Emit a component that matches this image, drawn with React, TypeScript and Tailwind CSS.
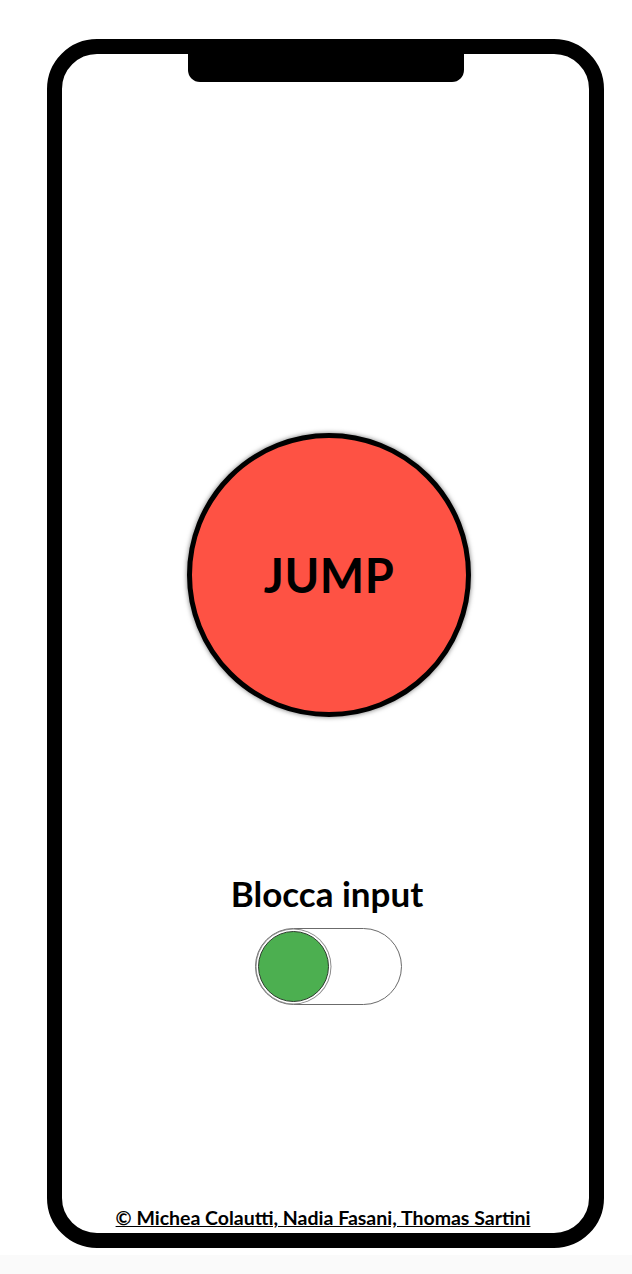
// Schermata del controller: cornice del telefono, pulsante JUMP e interruttore
import { useState } from "react";

const font = { fontFamily: "Lato, 'Open Sans', sans-serif" };

const App = () => {
    // stato dell'interruttore "Blocca input"
    const [locked, setLocked] = useState(false);

    return (
        <div className="min-h-screen bg-[#fafafa]" style={font}>
            <div className="bg-white h-[1255px] pt-[39px] pl-[47px]">
                {/* Cornice del telefono */}
                <div className="relative w-[557px] h-[1209px] border-[15px] border-black rounded-[50px] flex flex-col items-center">
                    {/* Notch */}
                    <div className="absolute top-0 left-[126px] w-[276px] h-[28px] bg-black rounded-b-[12px]" />

                    {/* Pulsante JUMP */}
                    <button
                        type="button"
                        className="mt-[379px] w-[284px] h-[284px] rounded-full bg-[#fe5244] border-[5px] border-black shadow-[0_0_5px_rgba(0,0,0,0.55)] flex items-center justify-center ml-[7px]"
                    >
                        <span className="text-[47px] font-bold text-black tracking-[0.5px] leading-none">JUMP</span>
                    </button>

                    {/* Blocca input */}
                    <p className="mt-[155px] text-[35px] font-bold leading-[42px] text-black ml-[3px]">Blocca input</p>
                    <button
                        type="button"
                        onClick={() => setLocked(!locked)}
                        className="mt-[14px] ml-[5px] w-[147px] h-[77px] rounded-full border border-[#6b6b6b] bg-white flex items-center px-[2px]"
                    >
                        <span
                            className={
                                "w-[71px] h-[71px] rounded-full bg-[#4caf50] border border-[#2f3d2f] shadow-[0_0_0_1.5px_#fff,0_0_0_2.5px_#8a8a8a] " +
                                (locked ? "ml-auto" : "")
                            }
                        />
                    </button>

                    {/* Footer */}
                    <p className="mt-auto mb-[2px] text-[19.5px] font-bold underline text-black leading-[26px] -ml-[5px]">
                        © Michea Colautti, Nadia Fasani, Thomas Sartini
                    </p>
                </div>
            </div>
        </div>
    );
};

export default App;
